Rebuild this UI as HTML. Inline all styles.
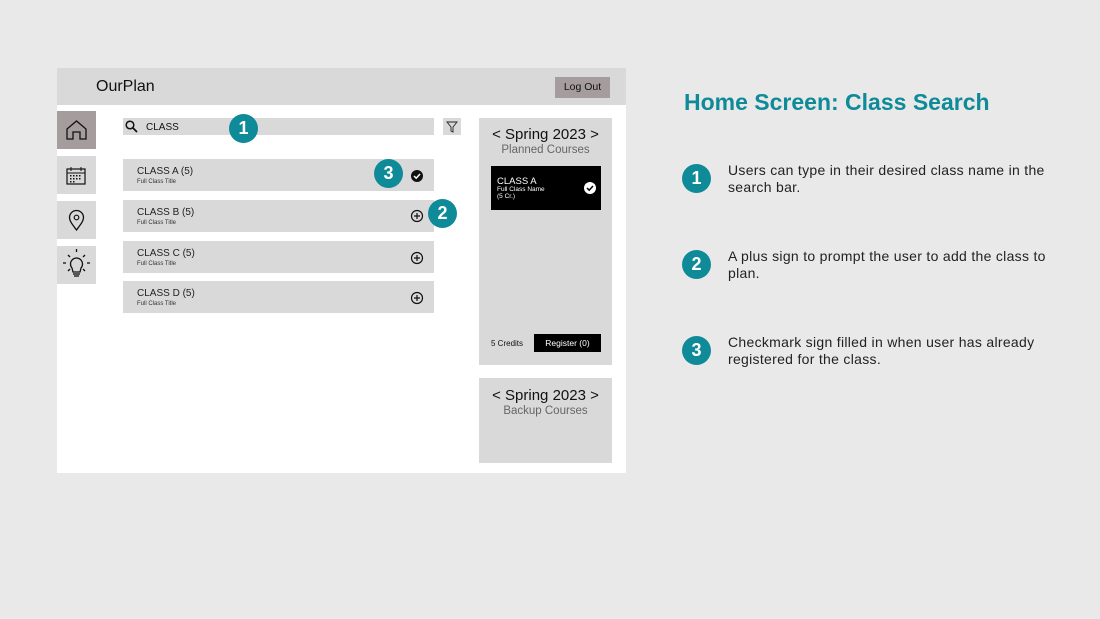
<!DOCTYPE html>
<html><head><style>
body{margin:0;width:1100px;height:619px;background:#e9e9e9;font-family:"Liberation Sans",sans-serif;position:relative;overflow:hidden}
.a{position:absolute}
.g{background:#d9d9d9}
.row{position:absolute;left:123px;width:311px;height:32px;background:#d9d9d9}
.row .t{position:absolute;left:14px;top:7px;font-size:10px;color:#222}
.row .s{position:absolute;left:14px;top:20px;font-size:6px;color:#333}
.num{position:absolute;width:29px;height:29px;border-radius:50%;background:#0e8a98;color:#fff;font-weight:bold;font-size:18px;text-align:center;line-height:29px}
.nav{position:absolute;left:57px;width:39px;height:38px;background:#d9d9d9}
.desc{position:absolute;left:728px;font-size:14px;letter-spacing:0.3px;color:#222;line-height:17px;width:335px}
</style></head><body>
<div class="a" style="left:57px;top:68px;width:569px;height:405px;background:#fff"></div>
<div class="a g" style="left:57px;top:68px;width:569px;height:37px"></div>
<div class="a" style="left:96px;top:78px;font-size:16px;color:#111">OurPlan</div>
<div class="a" style="left:555px;top:77px;width:55px;height:21px;background:#a59d9d;font-size:10.5px;text-align:center;line-height:21px;color:#111">Log Out</div>

<div class="nav" style="top:111px;background:#a59d9d"><svg width="39" height="38"><path d="M10 28V18L19.5 10L29 18V28H23V21H16V28Z" fill="none" stroke="#111" stroke-width="1.3"/></svg></div>
<div class="nav" style="top:156px"><svg width="39" height="38"><rect x="10" y="13" width="18" height="15" fill="none" stroke="#111" stroke-width="1.2"/><line x1="10" y1="17" x2="28" y2="17" stroke="#111"/><line x1="14" y1="11" x2="14" y2="15" stroke="#111"/><line x1="24" y1="11" x2="24" y2="15" stroke="#111"/><g fill="#111"><rect x="13" y="19" width="1.5" height="1.5"/><rect x="16" y="19" width="1.5" height="1.5"/><rect x="19" y="19" width="1.5" height="1.5"/><rect x="22" y="19" width="1.5" height="1.5"/><rect x="13" y="22" width="1.5" height="1.5"/><rect x="16" y="22" width="1.5" height="1.5"/><rect x="19" y="22" width="1.5" height="1.5"/><rect x="22" y="22" width="1.5" height="1.5"/><rect x="13" y="25" width="1.5" height="1.5"/><rect x="16" y="25" width="1.5" height="1.5"/></g></svg></div>
<div class="nav" style="top:201px"><svg width="39" height="38"><path d="M19.5 29C15 23 12.5 20 12.5 16.5A7 7 0 0 1 26.5 16.5C26.5 20 24 23 19.5 29Z" fill="none" stroke="#111" stroke-width="1.3"/><circle cx="19.5" cy="16.5" r="2.3" fill="none" stroke="#111" stroke-width="1.2"/></svg></div>
<div class="nav" style="top:246px"><svg width="39" height="38"><path d="M15 22A6 6 0 1 1 24 22L23 26H16Z" fill="none" stroke="#111" stroke-width="1.3"/><line x1="16" y1="28" x2="23" y2="28" stroke="#111" stroke-width="1.3"/><line x1="17" y1="30" x2="22" y2="30" stroke="#111" stroke-width="1.3"/><g stroke="#111" stroke-width="1.3"><line x1="19.5" y1="3" x2="19.5" y2="6"/><line x1="9" y1="17" x2="6" y2="17"/><line x1="30" y1="17" x2="33" y2="17"/><line x1="11" y1="9" x2="13" y2="11"/><line x1="28" y1="9" x2="26" y2="11"/><line x1="11" y1="25" x2="13" y2="23"/><line x1="28" y1="25" x2="26" y2="23"/></g></svg></div>

<div class="a g" style="left:123px;top:118px;width:311px;height:17px"></div>
<svg class="a" style="left:125px;top:120px" width="14" height="14"><circle cx="5" cy="5" r="3.8" fill="none" stroke="#111" stroke-width="1.5"/><line x1="8" y1="8" x2="12" y2="12" stroke="#111" stroke-width="1.8"/></svg>
<div class="a" style="left:146px;top:122px;font-size:10px;color:#111">CLASS</div>
<div class="a g" style="left:443px;top:118px;width:18px;height:17px"><svg width="18" height="17"><path d="M4 4H14L10 9V14L8 13V9Z" fill="none" stroke="#222" stroke-width="0.9"/></svg></div>

<div class="row" style="top:159px"><div class="t">CLASS A (5)</div><div class="s">Full Class Title</div></div>
<div class="row" style="top:200px"><div class="t">CLASS B (5)</div><div class="s">Full Class Title</div></div>
<div class="row" style="top:241px"><div class="t">CLASS C (5)</div><div class="s">Full Class Title</div></div>
<div class="row" style="top:281px"><div class="t">CLASS D (5)</div><div class="s">Full Class Title</div></div>
<svg class="a" style="left:410px;top:169px" width="14" height="14"><circle cx="7" cy="7" r="6" fill="#111"/><path d="M4 7L6.2 9.2L10 5" fill="none" stroke="#fff" stroke-width="1.5"/></svg>
<svg class="a" style="left:410px;top:209px" width="14" height="14"><circle cx="7" cy="7" r="5.5" fill="none" stroke="#111" stroke-width="1.2"/><path d="M7 4V10M4 7H10" stroke="#111" stroke-width="1.2"/></svg>
<svg class="a" style="left:410px;top:251px" width="14" height="14"><circle cx="7" cy="7" r="5.5" fill="none" stroke="#111" stroke-width="1.2"/><path d="M7 4V10M4 7H10" stroke="#111" stroke-width="1.2"/></svg>
<svg class="a" style="left:410px;top:291px" width="14" height="14"><circle cx="7" cy="7" r="5.5" fill="none" stroke="#111" stroke-width="1.2"/><path d="M7 4V10M4 7H10" stroke="#111" stroke-width="1.2"/></svg>

<div class="num" style="left:229px;top:114px">1</div>
<div class="num" style="left:374px;top:159px">3</div>
<div class="num" style="left:428px;top:199px">2</div>

<div class="a g" style="left:479px;top:118px;width:133px;height:247px"></div>
<div class="a" style="left:479px;top:126px;width:133px;text-align:center;font-size:15px;color:#111">&lt; Spring 2023 &gt;</div>
<div class="a" style="left:479px;top:144px;width:133px;text-align:center;font-size:11.5px;color:#666">Planned Courses</div>
<div class="a" style="left:491px;top:166px;width:110px;height:44px;background:#000;color:#fff">
<div class="a" style="left:6px;top:10px;font-size:9.5px">CLASS A</div>
<div class="a" style="left:6px;top:20px;font-size:6.5px;line-height:7px">Full Class Name<br>(5 Cr.)</div>
<svg class="a" style="left:92px;top:15px" width="14" height="14"><circle cx="7" cy="7" r="6" fill="#fff"/><path d="M4 7L6.2 9.2L10 5" fill="none" stroke="#000" stroke-width="1.5"/></svg></div>
<div class="a" style="left:491px;top:339px;font-size:8px;color:#111">5 Credits</div>
<div class="a" style="left:534px;top:334px;width:67px;height:18px;background:#000;color:#fff;font-size:8.5px;text-align:center;line-height:18px">Register (0)</div>

<div class="a g" style="left:479px;top:378px;width:133px;height:85px"></div>
<div class="a" style="left:479px;top:387px;width:133px;text-align:center;font-size:15px;color:#111">&lt; Spring 2023 &gt;</div>
<div class="a" style="left:479px;top:405px;width:133px;text-align:center;font-size:11.5px;color:#666">Backup Courses</div>

<div class="a" style="left:684px;top:89px;font-size:23px;font-weight:bold;color:#0e8a98">Home Screen: Class Search</div>
<div class="num" style="left:682px;top:164px">1</div>
<div class="desc" style="top:162px">Users can type in their desired class name in the search bar.</div>
<div class="num" style="left:682px;top:250px">2</div>
<div class="desc" style="top:248px">A plus sign to prompt the user to add the class to plan.</div>
<div class="num" style="left:682px;top:336px">3</div>
<div class="desc" style="top:334px">Checkmark sign filled in when user has already registered for the class.</div>
</body></html>
